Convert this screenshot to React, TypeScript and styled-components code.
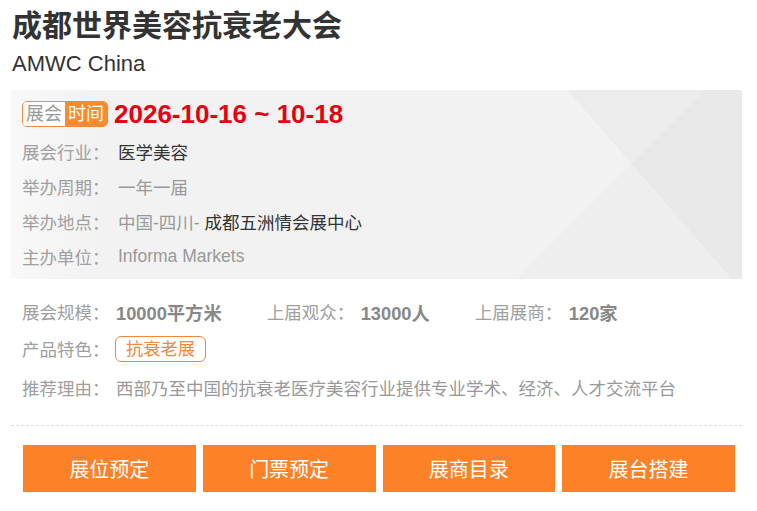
import React from 'react';
import styled, { createGlobalStyle } from 'styled-components';

const GlobalStyle = createGlobalStyle`
  body {
    margin: 0;
    background: #fff;
    font-family: "Liberation Sans", "Noto Sans CJK SC", sans-serif;
  }
`;

const Page = styled.div`
  width: 757px;
  padding: 7px 15px 0 11px;
  box-sizing: border-box;
`;

const Title = styled.h1`
  margin: 0;
  padding-left: 1px;
  font-size: 30px;
  line-height: 38px;
  font-weight: bold;
  color: #333;
`;

const SubTitle = styled.div`
  margin-top: 5px;
  padding-left: 1px;
  font-size: 22px;
  line-height: 28px;
  color: #333;
`;

const InfoBox = styled.div`
  margin-top: 12px;
  height: 189px;
  box-sizing: border-box;
  padding: 11px 11px 0;
  background-color: #f2f2f2;
  background-image:
    linear-gradient(135deg, rgba(0, 0, 0, 0) 75.5%, rgba(0, 0, 0, 0.015) 75.5%),
    linear-gradient(49deg, rgba(0, 0, 0, 0) 80.5%, rgba(0, 0, 0, 0.022) 80.5%),
    linear-gradient(90deg, rgba(255, 255, 255, 0.5), rgba(255, 255, 255, 0) 12%);
`;

const DateRow = styled.div`
  display: flex;
  align-items: center;
  gap: 6px;
  height: 26px;
  margin-bottom: 6.5px;
`;

const Badge = styled.div`
  display: flex;
  height: 26px;
  box-sizing: border-box;
  border: 1px solid #f08a3c;
  border-radius: 5px;
  overflow: hidden;
`;

const BadgePart = styled.span<{ $filled?: boolean }>`
  padding: 0 3px;
  font-size: 18px;
  line-height: 24px;
  background: ${(p) => (p.$filled ? '#fb8a2e' : '#fff')};
  color: ${(p) => (p.$filled ? '#fff' : '#999')};
`;

const DateText = styled.span`
  font-size: 26px;
  font-weight: bold;
  color: #e60012;
  line-height: 26px;
`;

const Row = styled.div<{ $h?: number }>`
  display: flex;
  align-items: center;
  height: ${(p) => p.$h ?? 35}px;
  font-size: 17.5px;
`;

const Label = styled.span<{ $w?: number }>`
  width: ${(p) => p.$w ?? 96}px;
  flex-shrink: 0;
  color: #a0a0a0;
`;

const Value = styled.span<{ $dark?: boolean }>`
  color: ${(p) => (p.$dark ? '#333' : '#999')};
`;

const Lower = styled.div`
  padding: 14px 11px 0;
`;

const Stat = styled.div`
  display: flex;
  align-items: center;
  margin-right: 45px;
`;

const StatValue = styled.span`
  font-size: 18.3px;
  font-weight: bold;
  color: #888;
`;

const Tag = styled.span`
  display: inline-block;
  height: 26px;
  box-sizing: border-box;
  padding: 0 10px;
  border: 1px solid #f0883a;
  border-radius: 6px;
  line-height: 24px;
  color: #f0883a;
  font-size: 17.3px;
`;

const Divider = styled.div`
  margin-top: 18px;
  border-top: 1px dashed #ddd;
`;

const ButtonRow = styled.div`
  display: flex;
  gap: 7px;
  margin-top: 19px;
  padding: 0 7px 0 12px;
`;

const ActionButton = styled.button`
  flex: 1;
  height: 47px;
  border: none;
  padding: 0;
  background: #fd8227;
  color: #fff;
  font-family: inherit;
  font-size: 20px;
  cursor: pointer;
`;

const rows = [
  { label: '展会行业：', value: <Value $dark>医学美容</Value> },
  { label: '举办周期：', value: <Value>一年一届</Value> },
  {
    label: '举办地点：',
    value: (
      <span>
        <Value>中国-四川- </Value>
        <Value $dark>成都五洲情会展中心</Value>
      </span>
    ),
  },
  { label: '主办单位：', value: <Value>Informa Markets</Value> },
];

const stats = [
  { label: '展会规模：', value: '10000平方米' },
  { label: '上届观众：', value: '13000人' },
  { label: '上届展商：', value: '120家' },
];

const actions = ['展位预定', '门票预定', '展商目录', '展台搭建'];

const App: React.FC = () => {
  return (
    <Page>
      <GlobalStyle />
      <Title>成都世界美容抗衰老大会</Title>
      <SubTitle>AMWC China</SubTitle>

      <InfoBox>
        <DateRow>
          <Badge>
            <BadgePart>展会</BadgePart>
            <BadgePart $filled>时间</BadgePart>
          </Badge>
          <DateText>2026-10-16 ~ 10-18</DateText>
        </DateRow>
        {rows.map((r) => (
          <Row key={r.label}>
            <Label>{r.label}</Label>
            {r.value}
          </Row>
        ))}
      </InfoBox>

      <Lower>
        <Row $h={37}>
          {stats.map((s) => (
            <Stat key={s.label}>
              <Label $w={94}>{s.label}</Label>
              <StatValue>{s.value}</StatValue>
            </Stat>
          ))}
        </Row>
        <Row $h={37}>
          <Label $w={93}>产品特色：</Label>
          <Tag>抗衰老展</Tag>
        </Row>
        <Row $h={40}>
          <Label $w={94}>推荐理由：</Label>
          <Value>西部乃至中国的抗衰老医疗美容行业提供专业学术、经济、人才交流平台</Value>
        </Row>
      </Lower>

      <Divider />

      <ButtonRow>
        {actions.map((a) => (
          <ActionButton key={a}>{a}</ActionButton>
        ))}
      </ButtonRow>
    </Page>
  );
};

export default App;
